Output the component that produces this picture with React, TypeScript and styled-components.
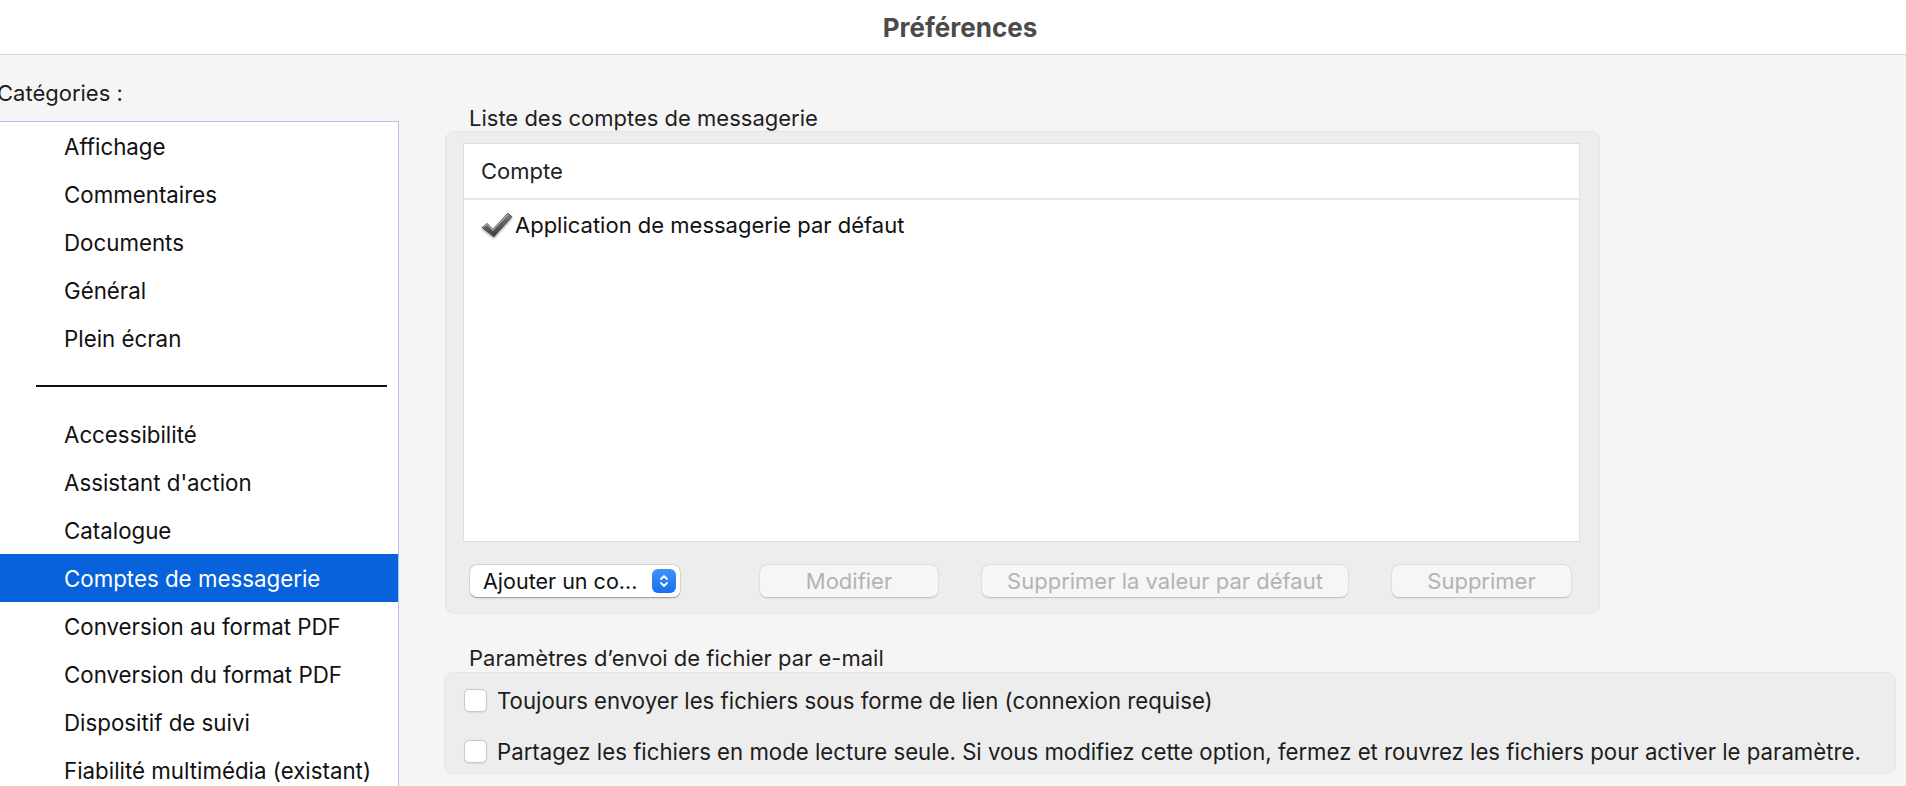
import React from "react";
import styled, { createGlobalStyle } from "styled-components";

const GlobalStyle = createGlobalStyle`
  html, body {
    margin: 0;
    padding: 0;
    background: #f5f5f5;
    font-family: Inter, "Liberation Sans", Arial, sans-serif;
    color: #1d1d1d;
  }
`;

const Window = styled.div`
  width: 1906px;
  height: 786px;
  overflow: hidden;
  background: #f5f5f5;
  display: flex;
  flex-direction: column;
`;

const TitleBar = styled.div`
  height: 53px;
  flex-shrink: 0;
  background: #ffffff;
  border-bottom: 1px solid #d3d3d3;
  display: flex;
  align-items: center;
  justify-content: center;
  font-size: 26px;
  font-weight: 700;
  color: #4b4b4b;
  padding-top: 1px;
  padding-left: 14px;
`;

const Body = styled.div`
  flex: 1;
  display: flex;
  flex-direction: row;
  min-height: 0;
`;

const LeftColumn = styled.div`
  width: 399px;
  flex-shrink: 0;
  display: flex;
  flex-direction: column;
`;

const CategoriesLabel = styled.div`
  font-size: 22px;
  line-height: 28px;
  padding: 24px 0 14px 0;
  margin-left: -3px;
`;

const Sidebar = styled.div`
  flex: 1;
  background: #ffffff;
  border-top: 1px solid #aec3ea;
  border-right: 1px solid #aec3ea;
`;

const Item = styled.div<{ selected?: boolean }>`
  height: 48px;
  display: flex;
  align-items: center;
  padding-left: 64px;
  font-size: 22.3px;
  background: ${(p) => (p.selected ? "#0862dc" : "transparent")};
  color: ${(p) => (p.selected ? "#ffffff" : "#111111")};
  white-space: nowrap;
`;

const SeparatorRow = styled.div`
  height: 48px;
  display: flex;
  align-items: center;
  padding-left: 36px;
  padding-right: 11px;
  &::after {
    content: "";
    flex: 1;
    height: 2px;
    background: #111111;
  }
`;

const RightColumn = styled.div`
  flex: 1;
  padding-left: 46px;
  padding-top: 50px;
  display: flex;
  flex-direction: column;
`;

const SectionLabel = styled.div<{ gapTop?: number }>`
  height: 26px;
  line-height: 26px;
  font-size: 22px;
  padding-left: 24px;
  margin-top: ${(p) => p.gapTop ?? 0}px;
  color: #1f1f1f;
  white-space: nowrap;
`;

const GroupBox = styled.div<{ width: number }>`
  width: ${(p) => p.width}px;
  box-sizing: border-box;
  background: #ededed;
  border: 1px solid #e6e6e6;
  border-radius: 9px;
`;

const AccountsGroup = styled(GroupBox)`
  height: 483px;
  padding: 11px 19px 0 17px;
  display: flex;
  flex-direction: column;
`;

const Table = styled.div`
  height: 397px;
  background: #ffffff;
  border: 1px solid #dedede;
  display: flex;
  flex-direction: column;
`;

const TableHeader = styled.div`
  height: 54px;
  border-bottom: 2px solid #e6e6e6;
  display: flex;
  align-items: center;
  padding-left: 17px;
  font-size: 22px;
  color: #222;
`;

const TableRow = styled.div`
  height: 50px;
  display: flex;
  align-items: center;
  padding-left: 16px;
  font-size: 22px;
  color: #111;
  gap: 1px;
`;

const ButtonRow = styled.div`
  display: flex;
  align-items: center;
  margin-top: 23px;
  padding-left: 7px;
`;

const Popup = styled.div`
  width: 210px;
  height: 32px;
  box-sizing: border-box;
  background: #ffffff;
  border-radius: 7px;
  box-shadow: 0 0.5px 1.5px rgba(0, 0, 0, 0.35), 0 0 0 0.5px rgba(0, 0, 0, 0.08);
  display: flex;
  align-items: center;
  justify-content: space-between;
  padding: 0 4px 0 13px;
  font-size: 21.5px;
  color: #111;
`;

const Stepper = styled.div`
  width: 24px;
  height: 24px;
  border-radius: 6px;
  background: linear-gradient(#3d92fa, #1670ee);
  display: flex;
  align-items: center;
  justify-content: center;
`;

const PushButton = styled.div<{ width: number; gapLeft: number }>`
  width: ${(p) => p.width}px;
  height: 32px;
  margin-left: ${(p) => p.gapLeft}px;
  box-sizing: border-box;
  background: #f6f6f6;
  border-radius: 7px;
  box-shadow: 0 0.5px 1.5px rgba(0, 0, 0, 0.18), 0 0 0 0.5px rgba(0, 0, 0, 0.05);
  display: flex;
  align-items: center;
  justify-content: center;
  font-size: 22px;
  color: #b3b3b3;
  white-space: nowrap;
`;

const MailGroup = styled(GroupBox)`
  margin-top: 1px;
  height: 102px;
  padding: 12px 0 0 19px;
  display: flex;
  flex-direction: column;
  gap: 21px;
  margin-left: -1px;
`;

const CheckRow = styled.div`
  height: 30px;
  display: flex;
  align-items: center;
  gap: 10px;
  font-size: 22.2px;
  color: #1c1c1c;
  white-space: nowrap;
`;

const CheckBox = styled.div`
  width: 23px;
  height: 23px;
  box-sizing: border-box;
  background: #ffffff;
  border: 1px solid #c9c9c9;
  border-radius: 5px;
  box-shadow: 0 0.5px 1px rgba(0, 0, 0, 0.08);
  flex-shrink: 0;
`;

const CheckMark = () => (
  <svg width="34" height="31" viewBox="0 0 33 30">
    <defs>
      <linearGradient id="chk" x1="0" y1="0" x2="0.3" y2="1">
        <stop offset="0" stopColor="#b8b8b8" />
        <stop offset="0.45" stopColor="#6d6d6d" />
        <stop offset="1" stopColor="#3a3a3a" />
      </linearGradient>
      <filter id="sh" x="-20%" y="-20%" width="140%" height="140%">
        <feDropShadow dx="0" dy="1.5" stdDeviation="1" floodColor="#000" floodOpacity="0.35" />
      </filter>
    </defs>
    <path
      d="M2 17 L7 13 L12.5 19 L27 3 L31 6.5 L13.5 26 Z"
      fill="url(#chk)"
      stroke="#4a4a4a"
      strokeWidth="0.8"
      strokeLinejoin="round"
      filter="url(#sh)"
    />
    <path d="M3.5 16.5 L7 14 L12.5 20 L27 4.3" fill="none" stroke="#e6e6e6" strokeWidth="0.9" opacity="0.8" />
  </svg>
);

const StepperIcon = () => (
  <svg width="12" height="16" viewBox="0 0 12 16">
    <path d="M3 6 L6 3 L9 6" fill="none" stroke="#fff" strokeWidth="1.8" strokeLinecap="round" strokeLinejoin="round" />
    <path d="M3 10 L6 13 L9 10" fill="none" stroke="#fff" strokeWidth="1.8" strokeLinecap="round" strokeLinejoin="round" />
  </svg>
);

const topItems = ["Affichage", "Commentaires", "Documents", "Général", "Plein écran"];
const otherItems = [
  "Accessibilité",
  "Assistant d'action",
  "Catalogue",
  "Comptes de messagerie",
  "Conversion au format PDF",
  "Conversion du format PDF",
  "Dispositif de suivi",
  "Fiabilité multimédia (existant)",
];

export default function App() {
  return (
    <Window>
      <GlobalStyle />
      <TitleBar>Préférences</TitleBar>
      <Body>
        <LeftColumn>
          <CategoriesLabel>Catégories :</CategoriesLabel>
          <Sidebar>
            {topItems.map((t) => (
              <Item key={t}>{t}</Item>
            ))}
            <SeparatorRow />
            {otherItems.map((t) => (
              <Item key={t} selected={t === "Comptes de messagerie"}>
                {t}
              </Item>
            ))}
          </Sidebar>
        </LeftColumn>
        <RightColumn>
          <SectionLabel>Liste des comptes de messagerie</SectionLabel>
          <AccountsGroup width={1155}>
            <Table>
              <TableHeader>Compte</TableHeader>
              <TableRow>
                <CheckMark />
                <span>Application de messagerie par défaut</span>
              </TableRow>
            </Table>
            <ButtonRow>
              <Popup>
                <span>Ajouter un co...</span>
                <Stepper>
                  <StepperIcon />
                </Stepper>
              </Popup>
              <PushButton width={178} gapLeft={80}>Modifier</PushButton>
              <PushButton width={366} gapLeft={44}>Supprimer la valeur par défaut</PushButton>
              <PushButton width={179} gapLeft={44}>Supprimer</PushButton>
            </ButtonRow>
          </AccountsGroup>
          <SectionLabel gapTop={31}>Paramètres d’envoi de fichier par e-mail</SectionLabel>
          <MailGroup width={1452}>
            <CheckRow>
              <CheckBox />
              <span>Toujours envoyer les fichiers sous forme de lien (connexion requise)</span>
            </CheckRow>
            <CheckRow>
              <CheckBox />
              <span>
                Partagez les fichiers en mode lecture seule. Si vous modifiez cette option, fermez et rouvrez les fichiers
                pour activer le paramètre.
              </span>
            </CheckRow>
          </MailGroup>
        </RightColumn>
      </Body>
    </Window>
  );
}
